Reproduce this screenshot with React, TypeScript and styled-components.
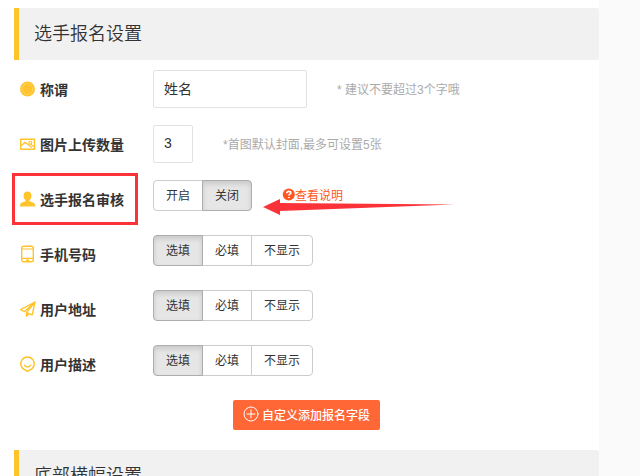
import React, { useState } from "react";
import styled, { createGlobalStyle, css } from "styled-components";

const GlobalStyle = createGlobalStyle`
  *, *::before, *::after { box-sizing: border-box; }
  html, body, #root { height: 100%; }
  body {
    margin: 0;
    overflow: hidden;
    background: #fafafa;
    color: #333;
    font-family: "Liberation Sans", "Noto Sans CJK SC", sans-serif;
    font-size: 12px;
  }
  button, input { font-family: inherit; }
`;

const Page = styled.main`
  height: 100%;
  overflow: hidden;
  margin-right: 41px;
  padding: 8px 0 0 14px;
  background: #fff;
`;

const SectionTitle = styled.h2`
  margin: 0;
  padding: 0 15px;
  border-left: 5px solid #ffc32b;
  border-radius: 0 2px 2px 0;
  background: #f1f1f1;
  font-size: 18px;
  font-weight: 350;
  line-height: 52px;
`;

const Form = styled.form`
  padding: 10px 0 20px 6px;
`;

const Row = styled.div`
  position: relative;
  display: grid;
  grid-template-columns: 133px 1fr;
  align-items: start;
  height: 55px;
`;

const labelText = css`
  display: flex;
  align-items: center;
  gap: 4px;
  height: 38px;
  font-size: 14px;
  font-weight: 700;
  white-space: nowrap;
`;

const FieldLabel = styled.label`
  ${labelText}
`;

const GroupLabel = styled.div`
  ${labelText}
`;

const Icon = styled.svg`
  display: block;
  flex: none;
  width: 16px;
  height: 18px;
  fill: none;
  stroke: #ffc32b;
  stroke-width: 1.4;
  stroke-linecap: round;
  stroke-linejoin: round;
`;

const Controls = styled.div`
  display: flex;
  align-items: center;
  gap: 30px;
`;

const TextInput = styled.input<{ $short?: boolean }>`
  width: ${(p) => (p.$short ? "40px" : "154px")};
  height: 38px;
  padding: 0 10px 2px;
  border: 1px solid #e2e2e2;
  border-radius: 2px;
  outline: none;
  background: #fff;
  color: #333;
  font-size: 14px;
`;

const Hint = styled.span`
  padding-bottom: 2px;
  color: #aaa;
`;

const Segments = styled.div`
  display: flex;
`;

const Segment = styled.button<{ $active: boolean }>`
  position: relative;
  height: 31px;
  padding: 0 12px 2px;
  border: 1px solid #ccc;
  background: #fff;
  color: #333;
  font-size: 12px;
  cursor: pointer;

  & + & { margin-left: -1px; }
  &:first-child { border-radius: 4px 0 0 4px; }
  &:last-child { border-radius: 0 4px 4px 0; }

  ${(p) =>
    p.$active &&
    css`
      z-index: 1;
      border-color: #adadad;
      background: #e6e6e6;
      box-shadow: inset 0 3px 5px rgba(0, 0, 0, 0.125);
    `}
`;

const HelpLink = styled.a`
  display: flex;
  align-items: center;
  padding-bottom: 2px;
  color: #ff5722;
  text-decoration: none;
`;

const HelpIcon = styled.svg`
  width: 13px;
  height: 13px;
`;

const Highlight = styled.div`
  position: absolute;
  top: -7px;
  left: -8px;
  width: 126px;
  height: 52px;
  border: 3px solid #fb3338;
  pointer-events: none;
`;

const Arrow = styled.svg`
  position: absolute;
  top: 18px;
  left: 243px;
  z-index: 2;
  width: 191px;
  height: 18px;
  pointer-events: none;
`;

const Actions = styled.div`
  display: flex;
  padding-left: 213px;
`;

const AddButton = styled.button`
  display: flex;
  align-items: center;
  gap: 3px;
  height: 30px;
  padding: 0 10px 2px;
  border: 0;
  border-radius: 2px;
  background: #ff6737;
  color: #fff;
  font-size: 12px;
  font-weight: 500;
  cursor: pointer;
`;

const PlusIcon = styled.svg`
  width: 16px;
  height: 16px;
  fill: none;
  stroke: #fff;
  stroke-linecap: round;
`;

type IconName = "coin" | "picture" | "person" | "phone" | "plane" | "smile";

const iconShapes: Record<IconName, React.ReactNode> = {
  coin: (
    <>
      <circle cx="7.5" cy="9" r="7.5" fill="#ffc32b" stroke="none" />
      <circle cx="7.5" cy="9" r="5.5" stroke="#ffdc80" strokeWidth=".6" />
    </>
  ),
  picture: (
    <>
      <rect x=".7" y="4.2" width="13.8" height="10" />
      <path d="M1.5 10.5 5 7.2l6.5 5M10.8 9.2l3 2.4" strokeWidth="1.2" />
      <circle cx="10.3" cy="7.8" r="1.5" strokeWidth="1.1" />
    </>
  ),
  person: (
    <path
      d="M7.5 1.5C4.7 1.5 3.4 3.4 3.6 6.2c.1 1.7.9 3.2 1.9 4v1.1L1.4 12.8C.4 13.3 0 14.4 0 16.5h15c0-2.1-.4-3.2-1.4-3.7l-4.1-1.5v-1.1c1-.8 1.8-2.3 1.9-4 .2-2.8-1.1-4.7-3.9-4.7Z"
      fill="#ffc32b"
      stroke="none"
    />
  ),
  phone: (
    <>
      <rect x="1.7" y="1.2" width="11.6" height="15.6" rx="2" />
      <path d="M2 4h11M2 13.4h11" strokeWidth="1.2" />
      <path d="M6.4 15.2h2.2" />
    </>
  ),
  plane: (
    <path d="M15 2 .6 9.6l4 2L15 2 6.5 12.6v3.6l2.3-2.5 3.4 1.1L15 2M6.5 12.6l2.3 1.1" />
  ),
  smile: (
    <>
      <path d="M9.3 15.2a6.7 6.7 0 1 0-3.6 0l1.8 1.2 1.8-1.2Z" />
      <path d="M4.3 10.2c1.5 2.4 4.9 2.4 6.4 0" strokeWidth="1.3" />
    </>
  ),
};

function LabelIcon({ name }: { name: IconName }) {
  return (
    <Icon viewBox="0 0 16 18" aria-hidden="true">
      {iconShapes[name]}
    </Icon>
  );
}

interface ChoiceRowProps {
  id: string;
  icon: IconName;
  label: string;
  options: string[];
  initial: string;
  help?: React.ReactNode;
  annotation?: React.ReactNode;
}

function ChoiceRow({ id, icon, label, options, initial, help, annotation }: ChoiceRowProps) {
  const [value, setValue] = useState(initial);
  return (
    <Row>
      <GroupLabel id={id}>
        <LabelIcon name={icon} />
        <span>{label}</span>
      </GroupLabel>
      <Controls>
        <Segments role="group" aria-labelledby={id}>
          {options.map((option) => (
            <Segment
              key={option}
              type="button"
              $active={option === value}
              aria-pressed={option === value}
              onClick={() => setValue(option)}
            >
              {option}
            </Segment>
          ))}
        </Segments>
        {help}
      </Controls>
      {annotation}
    </Row>
  );
}

const visibility = ["选填", "必填", "不显示"];

export default function App() {
  return (
    <>
      <GlobalStyle />
      <Page>
        <SectionTitle>选手报名设置</SectionTitle>
        <Form onSubmit={(e) => e.preventDefault()}>
          <Row>
            <FieldLabel htmlFor="title">
              <LabelIcon name="coin" />
              <span>称谓</span>
            </FieldLabel>
            <Controls>
              <TextInput id="title" defaultValue="姓名" />
              <Hint>* 建议不要超过3个字哦</Hint>
            </Controls>
          </Row>
          <Row>
            <FieldLabel htmlFor="count">
              <LabelIcon name="picture" />
              <span>图片上传数量</span>
            </FieldLabel>
            <Controls>
              <TextInput id="count" $short defaultValue="3" />
              <Hint>*首图默认封面,最多可设置5张</Hint>
            </Controls>
          </Row>
          <ChoiceRow
            id="review"
            icon="person"
            label="选手报名审核"
            options={["开启", "关闭"]}
            initial="关闭"
            help={
              <HelpLink href="#help">
                <HelpIcon viewBox="0 0 13 13" aria-hidden="true">
                  <circle cx="6.8" cy="6.5" r="6" fill="#ff5722" />
                  <path
                    d="M4.8 5.2c0-2.4 4-2.4 4-.3 0 1.3-1.9 1.2-1.9 2.5M6.9 9v1"
                    fill="none"
                    stroke="#fff"
                    strokeWidth="1.7"
                  />
                </HelpIcon>
                查看说明
              </HelpLink>
            }
            annotation={
              <>
                <Highlight />
                <Arrow viewBox="0 0 191 18" aria-hidden="true">
                  <path d="M0 9 17 1v4l174 1.5L17 13v4Z" fill="#fb3338" />
                </Arrow>
              </>
            }
          />
          <ChoiceRow id="phone" icon="phone" label="手机号码" options={visibility} initial="选填" />
          <ChoiceRow id="address" icon="plane" label="用户地址" options={visibility} initial="选填" />
          <ChoiceRow id="about" icon="smile" label="用户描述" options={visibility} initial="选填" />
          <Actions>
            <AddButton type="button">
              <PlusIcon viewBox="0 0 16 16" aria-hidden="true">
                <circle cx="8" cy="8" r="7" />
                <path d="M8 4v8M4 8h8" />
              </PlusIcon>
              自定义添加报名字段
            </AddButton>
          </Actions>
        </Form>
        <SectionTitle>底部横幅设置</SectionTitle>
      </Page>
    </>
  );
}
